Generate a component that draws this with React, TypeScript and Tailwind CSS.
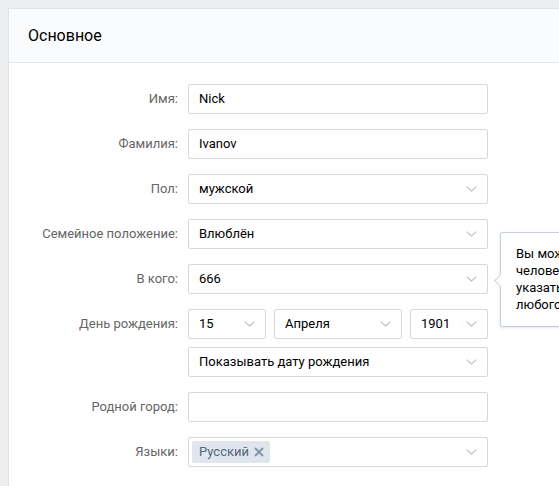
import React from 'react'

function Chevron() {
  return (
    <svg width="11" height="6" viewBox="0 0 11 6" fill="none" className="shrink-0">
      <path d="M0.6 0.6L5.5 5L10.4 0.6" stroke="#b7c0ca" strokeWidth="1.1" />
    </svg>
  )
}

function Row({ label, children }: { label?: string; children: React.ReactNode }) {
  return (
    <div className="flex items-center">
      <div className="w-[179px] shrink-0 pr-[10px] text-right text-[13px] text-[#656565]">{label}</div>
      <div className="w-[300px] shrink-0">{children}</div>
    </div>
  )
}

function TextInput({ value }: { value: string }) {
  return (
    <div className="flex h-[30px] items-center rounded-[2px] border border-[#d3d9de] bg-white px-[10px] text-[13px] text-black">
      {value}
    </div>
  )
}

function Select({ value, className = '' }: { value: string; className?: string }) {
  return (
    <div
      className={`flex h-[30px] items-center justify-between rounded-[2px] border border-[#d3d9de] bg-white pl-[10px] pr-[10px] text-[13px] text-black ${className}`}
    >
      <span className="truncate">{value}</span>
      <Chevron />
    </div>
  )
}

export default function App() {
  return (
    <div
      className="relative h-[486px] w-[559px] overflow-hidden bg-[#edeef0] pl-[8px] pt-[8px]"
      style={{ fontFamily: 'Roboto, "Open Sans", Arial, sans-serif' }}
    >
      <div className="w-[640px] border border-[#e3e4e8] bg-white">
        {/* Header */}
        <div className="flex h-[54px] items-center border-b border-[#e7e8ec] bg-[#fafbfc] pl-[19px] text-[16px] text-black">
          Основное
        </div>

        {/* Form */}
        <div className="flex flex-col gap-[15px] pb-[30px] pt-[21px]">
          <Row label="Имя:">
            <TextInput value="Nick" />
          </Row>
          <Row label="Фамилия:">
            <TextInput value="Ivanov" />
          </Row>
          <Row label="Пол:">
            <Select value="мужской" />
          </Row>
          <Row label="Семейное положение:">
            <Select value="Влюблён" />
          </Row>
          <Row label="В кого:">
            <Select value="666" />
          </Row>
          <div className="flex flex-col gap-[8px]">
            <Row label="День рождения:">
              <div className="flex gap-[8px]">
                <Select value="15" className="w-[78px] shrink-0" />
                <Select value="Апреля" className="w-[128px] shrink-0" />
                <Select value="1901" className="flex-1" />
              </div>
            </Row>
            <Row>
              <Select value="Показывать дату рождения" />
            </Row>
          </div>
          <Row label="Родной город:">
            <TextInput value="" />
          </Row>
          <Row label="Языки:">
            <div className="flex h-[30px] items-center justify-between rounded-[2px] border border-[#d3d9de] bg-white pl-[3px] pr-[10px]">
              <span className="flex h-[22px] items-center gap-[5px] rounded-[2px] bg-[#dfe6ed] pl-[7px] pr-[6px] text-[13px] text-[#55677d]">
                Русский
                <svg width="10" height="10" viewBox="0 0 10 10" fill="none">
                  <path d="M1 1L9 9M9 1L1 9" stroke="#8197ac" strokeWidth="2" />
                </svg>
              </span>
              <Chevron />
            </div>
          </Row>
        </div>
      </div>

      {/* Tooltip for "В кого" */}
      <div className="absolute left-[500px] top-[232px] h-[95px] w-[220px] rounded-[2px] border border-[#c5d0db] bg-white pl-[15px] pt-[12px] text-[13px] leading-[17px] text-black shadow-[0_1px_3px_rgba(0,0,0,0.1)]">
        <div className="absolute left-[-5px] top-[43px] h-[9px] w-[9px] rotate-45 border-b border-l border-[#c5d0db] bg-white" />
        <div className="whitespace-nowrap">Вы можете отметить</div>
        <div className="whitespace-nowrap">человека из списка друзей</div>
        <div className="whitespace-nowrap">указать имя и фамилию</div>
        <div className="whitespace-nowrap">любого человека.</div>
      </div>
    </div>
  )
}
